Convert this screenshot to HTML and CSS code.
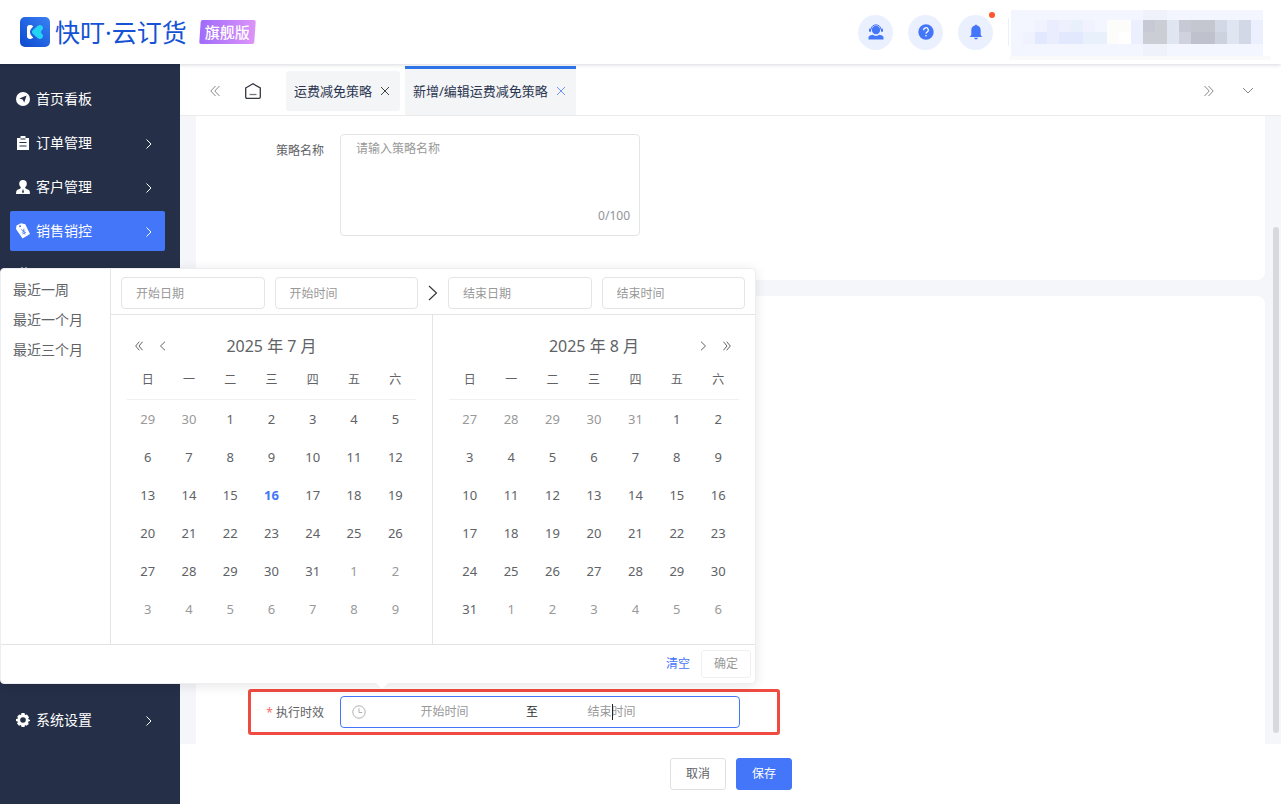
FILE: index.html
```html
<!DOCTYPE html>
<html lang="zh-CN">
<head>
<meta charset="utf-8">
<title>新增/编辑运费减免策略</title>
<link rel="stylesheet" href="styles.css">
</head>
<body>
<header class="header">
  <div class="brand">
    <svg class="brand-mark" width="30" height="30" viewBox="0 0 30 30">
      <defs><linearGradient id="mark" x1="0" y1="1" x2="1" y2="0"><stop offset="0" stop-color="#0b49cf"/><stop offset="1" stop-color="#3a80f4"/></linearGradient></defs>
      <rect width="30" height="30" rx="5" fill="url(#mark)"/>
      <path d="M7 10.500C7 7.500 11.500 7.300 13.200 9.500C10.800 11.500 10 13.500 10 15S10.800 18.500 13.200 20.500C11.500 22.700 7 22.500 7 19.500Z" fill="#fff"/>
      <path d="M11.800 15Q12 14 13 13L17.500 8.900C20 7 23.500 8.500 23 11.500C22.700 13 21 13.500 21 15S22.700 17 23 18.500C23.500 21.500 20 23 17.500 21.100L13 17Q12 16 11.800 15Z" fill="#22d3f3"/>
    </svg>
    <span class="brand-name">快叮·云订货</span>
    <span class="edition">旗舰版</span>
  </div>
  <div class="header-tools">
    <button class="round" aria-label="客服">
      <svg width="16" height="16" viewBox="0 0 16 16" fill="#4476f9"><circle cx="8" cy="6" r="4.200"/><path d="M2.800 6A5.200 5.200 0 0 1 13.200 6" fill="none" stroke="#4476f9"/><rect x="1" y="4.500" width="2" height="3.500" rx="1"/><rect x="13" y="4.500" width="2" height="3.500" rx="1"/><path d="M.5 15.500V13.500Q.7 11.500 4.500 10.800Q8 13 11.500 10.800Q15.300 11.500 15.500 13.500V15.500Z"/></svg>
    </button>
    <button class="round" aria-label="帮助">
      <svg width="16" height="16" viewBox="0 0 16 16"><circle cx="8" cy="8" r="7.700" fill="#4476f9"/><path d="M5.700 6.300A2.300 2.300 0 1 1 9 8.100Q8 8.700 8 9.700" fill="none" stroke="#fff" stroke-width="1.200"/><circle cx="8" cy="11.700" r=".8" fill="#fff"/></svg>
    </button>
    <button class="round has-dot" aria-label="消息">
      <svg width="16" height="16" viewBox="0 0 16 16" fill="#4476f9"><path d="M7 1.500Q8-.3 9 1.500C12 2.200 12.700 4.500 12.700 7V11L14.300 13H1.700L3.300 11V7C3.300 4.500 4 2.200 7 1.500ZM6 13.700H10Q9.500 15.500 8 15.500T6 13.700Z"/></svg>
    </button>
    <svg class="account" width="264" height="60" viewBox="0 -8 264 60" shape-rendering="crispEdges">
      <path fill="#fafafb" d="M1 46H263V50H1Z"/>
      <path fill="#eaf0fe" d="M0 8H1V36H0Z"/>
      <path fill="#f3f6fe" d="M3 0H255V46H3Z"/>
      <path fill="#eff2fa" d="M135 0H159V46H135Z"/>
      <path fill="#f0f2fe" d="M27 10H39V22H27ZM75 10H87V22H75ZM15 22H27V34H15Z"/>
      <path fill="#eaedfd" d="M39 10H51V22H39ZM39 22H51V34H39Z"/>
      <path fill="#eef0fe" d="M51 10H63V22H51Z"/>
      <path fill="#e8f0fc" d="M63 10H75V22H63ZM75 22H99V34H75Z"/>
      <path fill="#e2e8fd" d="M27 22H39V34H27ZM51 22H75V34H51Z"/>
      <path fill="#fcfcfa" d="M99 10H123V22H99ZM99 22H111V34H99Z"/>
      <path fill="#fff" d="M111 22H123V34H111Z"/>
      <path fill="#ecf0fe" d="M123 10H135V34H123ZM243 10H255V34H243Z"/>
      <path fill="#c7cad5" d="M135 10H147V22H135ZM171 10H183V22H171Z"/>
      <path fill="#cbcfd5" d="M147 10H159V22H147ZM135 22H159V34H135Z"/>
      <path fill="#dfe6f2" d="M159 10H171V34H159ZM219 10H231V34H219Z"/>
      <path fill="#c4c7d0" d="M183 10H207V22H183Z"/>
      <path fill="#d0d2de" d="M171 22H183V34H171Z"/>
      <path fill="#bfc1cd" d="M183 22H207V34H183Z"/>
      <path fill="#d3d8e6" d="M207 10H219V22H207ZM231 10H243V34H231Z"/>
      <path fill="#ccd2de" d="M207 22H219V34H207Z"/>
    </svg>
  </div>
</header>

<div class="body">
  <nav class="sidebar">
    <a class="nav-item" href="#"><svg width="14" height="14" viewBox="0 0 14 14"><circle cx="7" cy="7" r="7" fill="#fff"/><path d="M10.600 3.400L8.200 10.600L6.700 7.500L3.300 6.500Z" fill="#252f47"/></svg>首页看板</a>
    <a class="nav-item" href="#"><svg width="14" height="14" viewBox="0 0 14 14"><path d="M1 2H4.500V0H9.500V2H13V14H1Z" fill="#fff"/><path d="M4.500 3H9.500M3.500 6.500H10.500M3.500 10H10.500" stroke="#252f47" stroke-width="1.200"/></svg>订单管理<svg class="arrow" width="8" height="12" viewBox="0 0 8 12"><path d="M1.500 2.500L6 7L1.500 11.500"/></svg></a>
    <a class="nav-item" href="#"><svg width="14" height="14" viewBox="0 0 14 14"><circle cx="7" cy="3.800" r="3.800" fill="#fff"/><path d="M5 6H9L9.500 8.500L13 10Q14 11 14 14H0Q0 11 1 10L4.500 8.500Z" fill="#fff"/><path d="M7 8.800L8 12L7 13.200L6 12Z" fill="#252f47"/></svg>客户管理<svg class="arrow" width="8" height="12" viewBox="0 0 8 12"><path d="M1.500 2.500L6 7L1.500 11.500"/></svg></a>
    <a class="nav-item active" href="#"><svg width="14" height="16" viewBox="0 0 14 16"><path d="M.5 2.500L5 .3L9.300 1.300L14 11L6.500 15.500L0 6Z" fill="#fff"/><circle cx="4" cy="3.300" r="1" fill="#4476f9"/><path d="M5 6.500L7.500 8L8 5.500M7.500 8L9 11.500M5.800 9.500L9.300 7.800M6.500 11L10 9.300" fill="none" stroke="#4476f9" stroke-width=".8"/></svg>销售销控<svg class="arrow" width="8" height="12" viewBox="0 0 8 12"><path d="M1.500 2.500L6 7L1.500 11.500"/></svg></a>
    <a class="nav-item" href="#" aria-label="更多"><svg width="14" height="16" viewBox="0 0 14 16"><path d="M5 0H7V2H9V0H11V16H5Z" fill="#8a90a0"/></svg></a>
    <a class="nav-item last" href="#"><svg width="14" height="14" viewBox="0 0 14 14"><path d="M5.500 0H8.500L9 2L11 1.600L13 4.200L12 5.800L14 7V8L12 8.800L12.700 11L10.500 12.700L9 12L8.500 14H5.500L5 12L3 12.700L1 10.500L2 8.700L0 8V6L2 5.500L1.300 3.500L3.300 1.500L5 2Z" fill="#fff"/><circle cx="7" cy="7" r="2.800" fill="#252f47"/></svg>系统设置<svg class="arrow" width="8" height="12" viewBox="0 0 8 12"><path d="M1.500 2.500L6 7L1.500 11.500"/></svg></a>
  </nav>

  <main class="main">
    <div class="tabs">
      <button class="icon-btn collapse" aria-label="向左"><svg class="line" width="10" height="12" viewBox="0 0 10 12"><path d="M5.500 1L.8 6L5.500 11M9.500 1L4.800 6L9.500 11"/></svg></button>
      <button class="icon-btn home" aria-label="首页"><svg width="16" height="16" viewBox="0 0 16 16" fill="none" stroke="#33373f" stroke-width="1.300"><path d="M.7 5L8 .8L15.300 5V14Q15.300 15.300 14 15.300H2Q.7 15.300 .7 14Z"/><path d="M4.500 11.500H11.500" stroke="#777"/></svg></button>
      <div class="tab">运费减免策略<button class="close" aria-label="关闭"><svg width="10" height="10" viewBox="0 0 10 10"><path d="M1 1L9 9M9 1L1 9"/></svg></button></div>
      <div class="tab current">新增/编辑运费减免策略<button class="close" aria-label="关闭"><svg width="10" height="10" viewBox="0 0 10 10"><path d="M1 1L9 9M9 1L1 9"/></svg></button></div>
      <button class="icon-btn expand" aria-label="向右"><svg class="line" width="10" height="12" viewBox="0 0 10 12"><path d="M.5 1L5.200 6L.5 11M4.500 1L9.200 6L4.500 11"/></svg></button>
      <button class="icon-btn" aria-label="展开"><svg class="line" width="12" height="8" viewBox="0 0 12 8"><path d="M1 1L6 6L11 1"/></svg></button>
    </div>

    <div class="content">
      <section class="card basic">
        <div class="field">
          <label class="label" for="name">策略名称</label>
          <div class="area"><textarea id="name" placeholder="请输入策略名称"></textarea><span class="count">0/100</span></div>
        </div>
      </section>
      <section class="card rules">
        <div class="field framed">
          <label class="label required" for="start">执行时效</label>
          <div class="range">
            <svg width="14" height="14" viewBox="0 0 14 14" fill="none" stroke="#b0b0b0"><circle cx="7" cy="7" r="6.200"/><path d="M7 3.300V7.500H10.300"/></svg>
            <input id="start" placeholder="开始时间">
            <span class="to">至</span>
            <span class="caret"><input aria-label="结束时间" placeholder="结束时间"></span>
          </div>
        </div>
      </section>
      <div class="scrollbar"></div>
    </div>

    <footer class="actions">
      <button class="btn">取消</button>
      <button class="btn primary">保存</button>
    </footer>
  </main>
</div>

<div class="picker">
  <div class="picker-body">
    <div class="shortcuts">
      <button>最近一周</button><button>最近一个月</button><button>最近三个月</button>
    </div>
    <div class="picker-main">
      <div class="range-head">
        <div class="pair"><input aria-label="开始日期" placeholder="开始日期"><input aria-label="开始时间" placeholder="开始时间"></div>
        <svg width="10" height="16" viewBox="0 0 10 16" fill="none" stroke="#303133" stroke-width="1.100"><path d="M1 1L8.500 8L1 15"/></svg>
        <div class="pair"><input aria-label="结束日期" placeholder="结束日期"><input aria-label="结束时间" placeholder="结束时间"></div>
      </div>
      <div class="months">
        <div class="month">
          <div class="month-head">
            <span class="steps">
              <button class="icon-btn" aria-label="上一年"><svg class="line dark" width="8" height="10" viewBox="0 0 8 10"><path d="M4.300 .7L.7 5L4.300 9.300M7.600 .7L4 5L7.600 9.300"/></svg></button>
              <button class="icon-btn" aria-label="上个月"><svg class="line dark" width="8" height="10" viewBox="0 0 8 10"><path d="M6 .7L1.500 5L6 9.300"/></svg></button>
            </span>
            <span class="title">2025 年 7 月</span>
            <span class="steps"></span>
          </div>
          <table class="days">
            <thead><tr><th>日</th><th>一</th><th>二</th><th>三</th><th>四</th><th>五</th><th>六</th></tr></thead>
            <tbody>
              <tr><td class="out">29</td><td class="out">30</td><td>1</td><td>2</td><td>3</td><td>4</td><td>5</td></tr>
              <tr><td>6</td><td>7</td><td>8</td><td>9</td><td>10</td><td>11</td><td>12</td></tr>
              <tr><td>13</td><td>14</td><td>15</td><td class="today">16</td><td>17</td><td>18</td><td>19</td></tr>
              <tr><td>20</td><td>21</td><td>22</td><td>23</td><td>24</td><td>25</td><td>26</td></tr>
              <tr><td>27</td><td>28</td><td>29</td><td>30</td><td>31</td><td class="out">1</td><td class="out">2</td></tr>
              <tr><td class="out">3</td><td class="out">4</td><td class="out">5</td><td class="out">6</td><td class="out">7</td><td class="out">8</td><td class="out">9</td></tr>
            </tbody>
          </table>
        </div>
        <div class="month">
          <div class="month-head">
            <span class="steps"></span>
            <span class="title">2025 年 8 月</span>
            <span class="steps">
              <button class="icon-btn" aria-label="下个月"><svg class="line dark" width="8" height="10" viewBox="0 0 8 10"><path d="M2 .7L6.500 5L2 9.300"/></svg></button>
              <button class="icon-btn" aria-label="下一年"><svg class="line dark" width="8" height="10" viewBox="0 0 8 10"><path d="M.4 .7L4 5L.4 9.300M3.700 .7L7.300 5L3.700 9.300"/></svg></button>
            </span>
          </div>
          <table class="days">
            <thead><tr><th>日</th><th>一</th><th>二</th><th>三</th><th>四</th><th>五</th><th>六</th></tr></thead>
            <tbody>
              <tr><td class="out">27</td><td class="out">28</td><td class="out">29</td><td class="out">30</td><td class="out">31</td><td>1</td><td>2</td></tr>
              <tr><td>3</td><td>4</td><td>5</td><td>6</td><td>7</td><td>8</td><td>9</td></tr>
              <tr><td>10</td><td>11</td><td>12</td><td>13</td><td>14</td><td>15</td><td>16</td></tr>
              <tr><td>17</td><td>18</td><td>19</td><td>20</td><td>21</td><td>22</td><td>23</td></tr>
              <tr><td>24</td><td>25</td><td>26</td><td>27</td><td>28</td><td>29</td><td>30</td></tr>
              <tr><td>31</td><td class="out">1</td><td class="out">2</td><td class="out">3</td><td class="out">4</td><td class="out">5</td><td class="out">6</td></tr>
            </tbody>
          </table>
        </div>
      </div>
    </div>
  </div>
  <div class="picker-foot">
    <button class="link">清空</button>
    <button class="confirm" disabled>确定</button>
  </div>
</div>
</body>
</html>
```
FILE: styles.css
```css
* { box-sizing: border-box; }

body {
  margin: 0;
  height: 100vh;
  display: flex;
  flex-direction: column;
  overflow: hidden;
  background: #fff;
  color: #606266;
  font: 12px/20px "Noto Sans", "Noto Sans CJK SC", sans-serif;
}

button, input, textarea { font: inherit; color: inherit; }
button { padding: 0; border: 0; background: none; cursor: pointer; }
svg { display: block; flex: none; }
input, textarea { min-width: 0; border: 0; outline: 0; background: none; }
::placeholder { color: #999; opacity: 1; }

.header {
  position: relative;
  z-index: 1;
  flex: none;
  height: 64px;
  display: flex;
  justify-content: space-between;
  padding: 0 9px 0 20px;
  background: #fff;
  box-shadow: 0 1px 4px rgba(0, 21, 41, .16);
}
.brand { display: flex; align-items: center; }
.brand-name {
  margin-left: 5px;
  color: #1553d4;
  font-size: 25px;
  line-height: 32px;
  font-weight: 400;
}
.edition {
  position: relative;
  z-index: 0;
  margin-left: 13px;
  padding: 0 5px;
  color: #fff;
  font-size: 15px;
  line-height: 24px;
  font-weight: 500;
}
.edition::before {
  content: "";
  position: absolute;
  z-index: -1;
  inset: 0;
  border-radius: 2px;
  background: linear-gradient(90deg, #a06bfb, #dc94f8);
  transform: skewX(-4deg);
}
.header-tools { display: flex; align-items: center; gap: 15px; }
.round {
  position: relative;
  width: 35px;
  height: 35px;
  display: grid;
  place-items: center;
  border-radius: 50%;
  background: #ebf0fe;
}
.has-dot::after {
  content: "";
  position: absolute;
  top: -3px;
  right: -2px;
  width: 6px;
  height: 6px;
  border-radius: 50%;
  background: #ff5430;
}

.body { flex: 1; min-height: 0; display: flex; }

.sidebar {
  flex: none;
  width: 180px;
  display: flex;
  flex-direction: column;
  gap: 4px;
  padding: 15px 15px 64px 10px;
  background: #252f47;
}
.nav-item {
  height: 40px;
  display: flex;
  align-items: center;
  gap: 6px;
  padding: 0 12px 0 6px;
  border-radius: 2px;
  color: #fff;
  font-size: 14px;
  text-decoration: none;
}
.nav-item.active { background: #4476f9; }
.nav-item.last { margin-top: auto; }
.arrow { margin-left: auto; fill: none; stroke: #fff; stroke-width: 1; }

.main { flex: 1; min-width: 0; display: flex; flex-direction: column; }

.tabs {
  flex: none;
  height: 52px;
  display: flex;
  align-items: center;
  padding: 2px 27px 0 30px;
  border-bottom: 1px solid #ebebeb;
}
.icon-btn { display: grid; place-items: center; }
.line { fill: none; stroke: #888; stroke-width: 1; }
.line.dark { stroke: #606266; }
.home { margin: 0 25px; }
.tab {
  height: 40px;
  display: flex;
  align-items: center;
  margin-right: 5px;
  padding: 0 10px 0 8px;
  border-radius: 3px;
  background: #f4f5f7;
  color: #2b3550;
  font-size: 13px;
}
.tab.current {
  align-self: flex-end;
  height: 49px;
  padding-bottom: 2px;
  border-top: 3px solid #2f76ea;
  border-radius: 0;
}
.close { margin-left: 8px; }
.close svg { fill: none; stroke: #444; stroke-width: 1; }
.current .close svg { stroke: #6f92f5; }
.expand { margin: 0 28px 0 auto; }

.content {
  position: relative;
  flex: 1;
  min-height: 0;
  display: flex;
  flex-direction: column;
  gap: 16px;
  padding: 0 16px;
  background: #f5f6f9;
}
.card { background: #fff; }
.basic { padding: 18px 0 44px; border-radius: 0 0 8px 8px; }
.rules {
  flex: 1;
  display: flex;
  flex-direction: column;
  justify-content: flex-end;
  align-items: flex-start;
  padding-bottom: 9px;
  border-radius: 8px 8px 0 0;
}
.scrollbar {
  position: absolute;
  top: 111px;
  bottom: 11px;
  right: 2px;
  width: 6px;
  border-radius: 3px;
  background: #d8d9dc;
}

.field { display: flex; }
.label { width: 144px; padding-right: 16px; line-height: 34px; text-align: right; }
.required::before { content: "* "; color: #f56c6c; }
.area {
  width: 300px;
  height: 102px;
  display: flex;
  flex-direction: column;
  padding: 4px 9px 9px 15px;
  border: 1px solid #e4e4e4;
  border-radius: 4px;
}
.area textarea { flex: 1; padding: 0; resize: none; }
.count { color: #909399; text-align: right; }

.framed {
  width: 532px;
  height: 46px;
  margin-left: 52px;
  padding: 4px 0;
  border: 3px solid #ef4b40;
  border-radius: 3px;
}
.framed .label { width: 89px; }
.range {
  width: 400px;
  height: 32px;
  display: flex;
  align-items: center;
  padding: 0 54px 0 11px;
  border: 1px solid #4476f9;
  border-radius: 4px;
}
.range > svg { margin-right: 5px; }
.range input { flex: 1; width: 100%; padding: 0; text-align: center; }
.to { width: 20px; color: #303133; text-align: right; }
.caret { position: relative; flex: 1; display: flex; }
.caret::after {
  content: "";
  position: absolute;
  left: 50%;
  top: 2px;
  width: 1px;
  height: 16px;
  background: #222;
}

.actions { flex: none; display: flex; gap: 10px; padding: 14px 490px; }
.btn {
  flex: none;
  width: 56px;
  height: 32px;
  border: 1px solid #e0e0e0;
  border-radius: 3px;
}
.btn.primary { border-color: #4476f9; background: #4476f9; color: #fff; }

.picker {
  position: absolute;
  z-index: 2;
  top: 268px;
  left: 0;
  width: 756px;
  border: 1px solid #eceef2;
  border-radius: 4px;
  background: #fff;
  box-shadow: 0 2px 12px rgba(0, 0, 0, .1);
}
.picker::after {
  content: "";
  position: absolute;
  top: 100%;
  left: 375px;
  border: 6px solid transparent;
  border-top-color: #fff;
  border-bottom: 0;
}
.picker-body { display: flex; border-bottom: 1px solid #e4e4e4; }
.shortcuts {
  flex: none;
  width: 110px;
  display: flex;
  flex-direction: column;
  padding: 6px 0 0 12px;
  border-right: 1px solid #e4e4e4;
}
.shortcuts button { font-size: 14px; line-height: 30px; text-align: left; }
.picker-main { flex: 1; min-width: 0; }
.range-head {
  display: flex;
  align-items: center;
  gap: 10px;
  padding: 8px 10px 5px;
  border-bottom: 1px solid #e4e4e4;
}
.pair { flex: 1; display: flex; gap: 10px; }
.pair input {
  flex: 1;
  width: 0;
  height: 32px;
  padding: 0 14px;
  border: 1px solid #e4e4e4;
  border-radius: 4px;
}
.months { display: grid; grid-template-columns: 1fr 1fr; }
.month { padding: 16px; }
.month:first-child { border-right: 1px solid #e4e4e4; }
.month-head { display: flex; align-items: center; height: 30px; padding: 0 8px; }
.steps { width: 32px; display: flex; gap: 16px; }
.title { flex: 1; font-size: 16px; text-align: center; }
.days { width: 100%; border-spacing: 0; table-layout: fixed; text-align: center; }
.days th {
  height: 39px;
  padding: 0;
  border-bottom: 1px solid #f0f0f0;
  font-weight: 400;
}
.days td { height: 38px; padding: 0; font-size: 13px; }
.days .out { color: #999; }
.days .today { color: #4476f9; font-weight: 700; }

.picker-foot {
  display: flex;
  justify-content: flex-end;
  align-items: center;
  gap: 11px;
  padding: 5px 4px;
}
.link { color: #4476f9; }
.confirm {
  width: 50px;
  height: 28px;
  border: 1px solid #f0f0f0;
  border-radius: 3px;
  color: #999;
}
```
